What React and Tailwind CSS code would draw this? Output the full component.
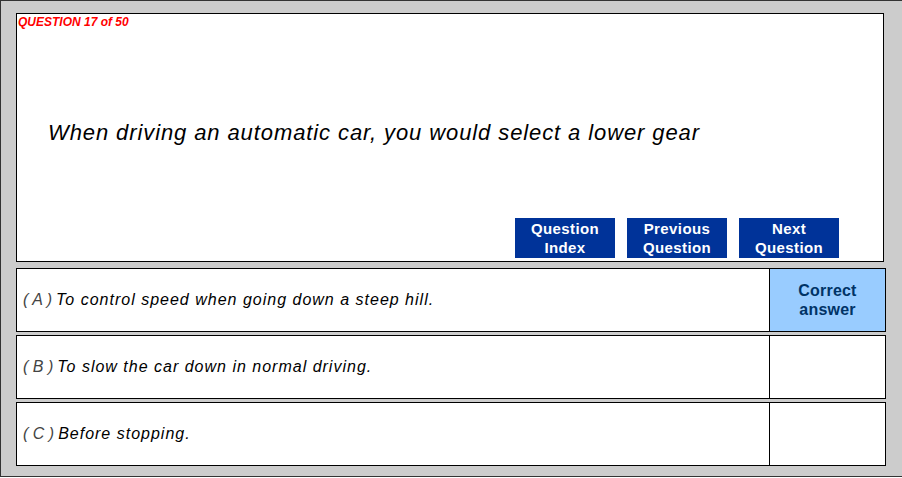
export default function App() {
  const answers = [
    { l: "A", t: "To control speed when going down a steep hill.", correct: true },
    { l: "B", t: "To slow the car down in normal driving." },
    { l: "C", t: "Before stopping." },
  ];
  return (
    <div
      className="w-[902px] h-[478px] bg-white"
      style={{ fontFamily: '"Liberation Sans", Arial, sans-serif' }}
    >
      <div className="w-[902px] h-[477px] bg-[#cccccc] border-l border-t border-b border-[#333333] pl-[15px] pt-[12px]">
        <div className="w-[868px] h-[249px] border border-black bg-white flex flex-col">
          <div className="pl-[1px] pt-[1px] text-[12px] leading-[14px] font-bold italic text-[#ff0000]">
            QUESTION 17 of 50
          </div>
          <div className="pl-[31px] mt-[91px] text-[22px] leading-[26px] tracking-[0.9px] italic text-black">
            When driving an automatic car, you would select a lower gear
          </div>
          <div className="mt-auto mb-[3px] flex justify-end gap-[12px] pr-[44px]">
            {[
              ["Question", "Index"],
              ["Previous", "Question"],
              ["Next", "Question"],
            ].map(([a, b]) => (
              <div
                key={a + b}
                className="w-[100px] h-[40px] bg-[#003399] text-white font-bold text-[15px] leading-[19px] tracking-[0.4px] flex flex-col items-center justify-center"
              >
                <span>{a}</span>
                <span>{b}</span>
              </div>
            ))}
          </div>
        </div>
        <div className="mt-[6px] flex flex-col gap-[3px]">
          {answers.map((a) => (
            <div
              key={a.l}
              className="w-[870px] h-[64px] border border-black bg-white flex"
            >
              <div className="flex-1 flex items-center pl-[6px] text-[16px] italic text-black">
                <span className="text-[#444444]">( {a.l} )</span>
                <span className="ml-[4px] tracking-[1px]">{a.t}</span>
              </div>
              <div
                className={
                  "w-[116px] border-l border-black flex flex-col items-center justify-center font-bold text-[16px] leading-[19px] tracking-[0.2px] text-[#003366] " +
                  (a.correct ? "bg-[#99ccff]" : "bg-white")
                }
              >
                {a.correct ? (
                  <>
                    <span>Correct</span>
                    <span>answer</span>
                  </>
                ) : null}
              </div>
            </div>
          ))}
        </div>
      </div>
    </div>
  );
}
